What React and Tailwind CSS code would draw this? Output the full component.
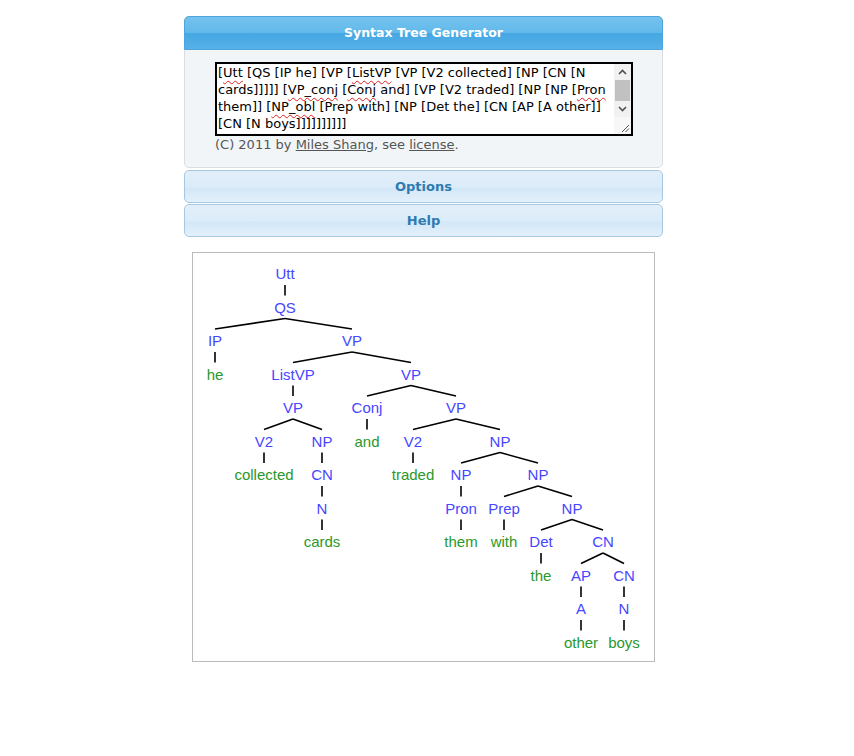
import React from "react";

const BLUE = "#4646ff";
const GREEN = "#2a982a";

// page coords of the tree picture's top-left corner
const OX = 192;
const OY = 252;
const lv = (n) => 274 + n * 33.5;

const nodes = {
  utt: ["Utt", 285, lv(0), 0],
  qs: ["QS", 285, lv(1), 0],
  ip: ["IP", 215, lv(2), 0],
  vp1: ["VP", 352, lv(2), 0],
  he: ["he", 215, lv(3), 1],
  listvp: ["ListVP", 293, lv(3), 0],
  vp2: ["VP", 411, lv(3), 0],
  vp3: ["VP", 293, lv(4), 0],
  conj: ["Conj", 367, lv(4), 0],
  vp4: ["VP", 456, lv(4), 0],
  v2a: ["V2", 264, lv(5), 0],
  npa: ["NP", 322, lv(5), 0],
  and: ["and", 367, lv(5), 1],
  v2b: ["V2", 413, lv(5), 0],
  npb: ["NP", 500, lv(5), 0],
  collected: ["collected", 264, lv(6), 1],
  cna: ["CN", 322, lv(6), 0],
  traded: ["traded", 413, lv(6), 1],
  npc: ["NP", 461, lv(6), 0],
  npd: ["NP", 538, lv(6), 0],
  na: ["N", 322, lv(7), 0],
  pron: ["Pron", 461, lv(7), 0],
  prep: ["Prep", 504, lv(7), 0],
  npe: ["NP", 572, lv(7), 0],
  cards: ["cards", 322, lv(8), 1],
  them: ["them", 461, lv(8), 1],
  with: ["with", 504, lv(8), 1],
  det: ["Det", 541, lv(8), 0],
  cnb: ["CN", 603, lv(8), 0],
  the: ["the", 541, lv(9), 1],
  ap: ["AP", 581, lv(9), 0],
  cnc: ["CN", 624, lv(9), 0],
  a: ["A", 581, lv(10), 0],
  nb: ["N", 624, lv(10), 0],
  other: ["other", 581, lv(11), 1],
  boys: ["boys", 624, lv(11), 1],
};

const edges = [
  ["utt", "qs"], ["qs", "ip"], ["qs", "vp1"], ["ip", "he"],
  ["vp1", "listvp"], ["vp1", "vp2"], ["listvp", "vp3"],
  ["vp3", "v2a"], ["vp3", "npa"], ["v2a", "collected"],
  ["npa", "cna"], ["cna", "na"], ["na", "cards"],
  ["vp2", "conj"], ["vp2", "vp4"], ["conj", "and"],
  ["vp4", "v2b"], ["vp4", "npb"], ["v2b", "traded"],
  ["npb", "npc"], ["npb", "npd"], ["npc", "pron"], ["pron", "them"],
  ["npd", "prep"], ["npd", "npe"], ["prep", "with"],
  ["npe", "det"], ["npe", "cnb"], ["det", "the"],
  ["cnb", "ap"], ["cnb", "cnc"], ["ap", "a"], ["a", "other"],
  ["cnc", "nb"], ["nb", "boys"],
];

function SyntaxTree() {
  return (
    <svg width="461" height="408" viewBox="0 0 461 408" className="block">
      {edges.map(([p, c]) => {
        const [, px, py] = nodes[p];
        const [, cx, cy] = nodes[c];
        return (
          <line
            key={p + c}
            x1={px - OX - 1}
            y1={py + 11 - OY - 1}
            x2={cx - OX - 1}
            y2={cy - 12 - OY - 1}
            stroke="#000"
            strokeWidth="1.6"
          />
        );
      })}
      {Object.entries(nodes).map(([k, [label, x, y, leaf]]) => (
        <text
          key={k}
          x={x - OX - 1}
          y={y - OY + 4}
          textAnchor="middle"
          fontFamily="'Liberation Sans', Arial, sans-serif"
          fontSize="15"
          fill={leaf ? GREEN : BLUE}
        >
          {label}
        </text>
      ))}
    </svg>
  );
}

const sq = "underline decoration-wavy decoration-[#e02020] decoration-1 underline-offset-[3px]";

function FakeTextarea() {
  return (
    <div className="flex h-[74px] w-[418px] border-2 border-black bg-white">
      <div className="flex-1 overflow-hidden pl-[1px] text-[13px] leading-[17px] text-black">
        [<span className={sq}>Utt</span> [QS [IP he] [VP [<span className={sq}>ListVP</span> [VP [V2 collected] [NP [CN [N
        cards]]]]] [<span className={sq}>VP_conj</span> [<span className={sq}>Conj</span> and] [VP [V2 traded] [NP [NP [<span className={sq}>Pron</span>
        {" "}them]] [<span className={sq}>NP_obl</span> [Prep with] [NP [Det the] [CN [AP [A other]]
        [CN [N boys]]]]]]]]]]
      </div>
      <div className="flex w-[17px] flex-col bg-[#f1f1f1]">
        <div className="flex h-[16px] items-center justify-center">
          <svg width="9" height="6" viewBox="0 0 9 6">
            <path d="M1 5 L4.5 1.5 L8 5" fill="none" stroke="#505050" strokeWidth="1.6" />
          </svg>
        </div>
        <div className="mx-[1px] h-[21px] bg-[#c1c1c1]" />
        <div className="flex-1" />
        <div className="flex h-[16px] items-center justify-center">
          <svg width="9" height="6" viewBox="0 0 9 6">
            <path d="M1 1 L4.5 4.5 L8 1" fill="none" stroke="#505050" strokeWidth="1.6" />
          </svg>
        </div>
        <div className="flex h-[17px] items-end justify-end bg-[#f7f7f7] pb-[1px] pr-[1px]">
          <svg width="9" height="9" viewBox="0 0 9 9">
            <path d="M8 1 L1 8 M8 4.5 L4.5 8" stroke="#555" strokeWidth="1" />
          </svg>
        </div>
      </div>
    </div>
  );
}

export default function App() {
  return (
    <div className="min-h-[756px] bg-white pt-[16px]" style={{ fontFamily: "'DejaVu Sans', Verdana, sans-serif" }}>
      <div className="ml-[184px] w-[479px]">
        {/* header + editor */}
        <div className="rounded-[5px] border border-[#dddddd] bg-[#f2f5f8]">
          <div className="-mx-[1px] -mt-[1px] flex h-[34px] items-center justify-center rounded-t-[5px] border border-[#4ea4dc] bg-[linear-gradient(to_bottom,#74c2ee_0%,#63b9eb_48%,#45a7e2_52%,#56b1e8_100%)] text-[12.5px] font-bold text-white">
            Syntax Tree Generator
          </div>
          <div className="flex flex-col pb-[14px] pl-[30px] pt-[12px]">
            <FakeTextarea />
            <div className="text-[13px] leading-[17px] text-[#555555]">
              (C) 2011 by <span className="underline">Miles Shang</span>, see <span className="underline">license</span>.
            </div>
          </div>
        </div>

        {/* accordion headers */}
        <div className="mt-[2px] flex h-[33px] items-center justify-center rounded-[5px] border border-[#a6c9e2] bg-[linear-gradient(to_bottom,#e2effa_0%,#dcecf9_50%,#d3e7f7_55%,#e3f0fb_100%)] text-[13px] font-bold text-[#2e7bb0]">
          Options
        </div>
        <div className="mt-[1px] flex h-[33px] items-center justify-center rounded-[5px] border border-[#a6c9e2] bg-[linear-gradient(to_bottom,#e2effa_0%,#dcecf9_50%,#d3e7f7_55%,#e3f0fb_100%)] text-[13px] font-bold text-[#2e7bb0]">
          Help
        </div>

        {/* tree picture */}
        <div className="ml-[8px] mt-[15px] w-[463px] border border-[#bbbbbb] bg-white">
          <SyntaxTree />
        </div>
      </div>
    </div>
  );
}
